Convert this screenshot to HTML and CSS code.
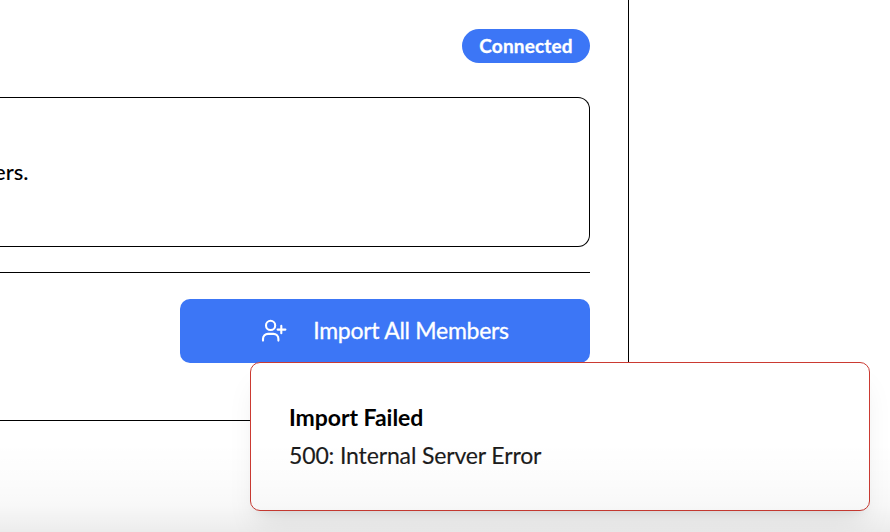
FILE: index.html
```
<!DOCTYPE html>
<html lang="en">
<head>
<meta charset="utf-8">
<title>Import Members</title>
<link rel="stylesheet" href="styles.css">
</head>
<body>
<main class="panel">
  <header class="panel-header"><span class="badge">Connected</span></header>
  <section class="notice"><p>ers.</p></section>
  <footer class="actions">
    <button class="import">
      <svg class="icon" viewBox="0 0 26 24" fill="none" stroke="currentColor" stroke-width="2.1" stroke-linecap="round" stroke-linejoin="round">
        <circle cx="9.6" cy="6.4" r="4.6"/>
        <path d="M2 21.6v-1.7a5 5 0 0 1 5-5h5.4a5 5 0 0 1 5 5v1.7M20.3 6.9v7.4M16.6 10.6h7.8"/>
      </svg>
      <span>Import All Members</span>
    </button>
  </footer>
</main>
<aside class="toast" role="alert">
  <h2>Import Failed</h2>
  <p>500: Internal Server Error</p>
</aside>
<div class="fade"></div>
</body>
</html>
```
FILE: styles.css
```
* { box-sizing: border-box; }
body {
  position: relative;
  margin: 0;
  height: 532px;
  overflow: hidden;
  background: #fff;
  color: #000;
  font-family: Lato, sans-serif;
}
h2, p { margin: 0; }
.panel {
  width: 629px;
  height: 421px;
  padding: 29px 38px 0 0;
  border: solid #000;
  border-width: 0 1px 1px 0;
}
.panel-header {
  display: flex;
  justify-content: flex-end;
  margin-bottom: 34px;
}
.badge {
  width: 128px;
  height: 34px;
  border-radius: 17px;
  background: #3c76f6;
  color: #fff;
  font-size: 19px;
  font-weight: 700;
  letter-spacing: .15px;
  line-height: 34px;
  text-align: center;
  -webkit-text-stroke: .3px currentColor;
}
.notice {
  display: flex;
  align-items: center;
  height: 150px;
  padding-bottom: 2px;
  border: 1px solid #000;
  border-left: 0;
  border-radius: 0 12px 12px 0;
  font-size: 22px;
  font-weight: 500;
}
.notice p { margin-left: -6px; }
.actions {
  display: flex;
  justify-content: flex-end;
  margin-top: 25px;
  padding-top: 26px;
  border-top: 1px solid #000;
}
.import {
  display: flex;
  align-items: center;
  justify-content: center;
  gap: 26px;
  width: 410px;
  height: 64px;
  padding: 0;
  border: 0;
  border-radius: 10px;
  background: #3c76f6;
  color: #fff;
  font: 400 23px Lato, sans-serif;
  letter-spacing: -.27px;
}
.import span {
  padding-bottom: 2px;
  -webkit-text-stroke: .3px currentColor;
}
.icon { width: 26px; height: 24px; }
.toast {
  position: absolute;
  right: 20px;
  bottom: 21px;
  width: 620px;
  height: 149px;
  padding: 36px 38px;
  border: 1px solid #cb3a32;
  border-radius: 10px;
  background: #fff;
  box-shadow: 0 20px 30px -6px rgba(0, 0, 0, .08), 0 8px 12px -8px rgba(0, 0, 0, .1);
  font-size: 23px;
  line-height: 36px;
}
.toast h2 { font-size: 23px; font-weight: 700; letter-spacing: -.05px; }
.toast p {
  margin-top: 2px;
  color: #1b1b1b;
  letter-spacing: -.14px;
  -webkit-text-stroke: .15px currentColor;
}
.fade {
  position: absolute;
  inset: auto 0 0;
  height: 90px;
  background: linear-gradient(transparent, rgba(0, 0, 0, .01) 38%, rgba(0, 0, 0, .028) 70%, rgba(0, 0, 0, .075));
  pointer-events: none;
}
```
